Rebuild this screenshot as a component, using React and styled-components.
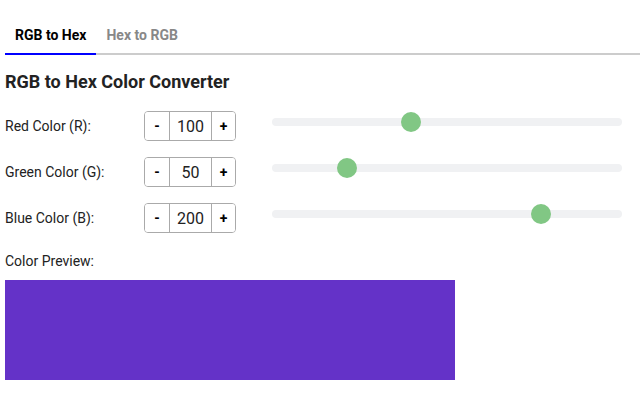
import React, { useState } from "react";
import styled, { createGlobalStyle } from "styled-components";

const GlobalStyle = createGlobalStyle`
  * { box-sizing: border-box; }
  body {
    margin: 0;
    background: #fff;
    font-family: Roboto, "Liberation Sans", Arial, sans-serif;
    color: #222;
  }
`;

const Page = styled.div`
  padding: 17px 0 0 5px;
`;

const TabBar = styled.div`
  display: flex;
  border-bottom: 2px solid #ccc;
`;

const Tab = styled.button`
  border: none;
  background: none;
  font-family: inherit;
  font-size: 14px;
  font-weight: 700;
  line-height: 16px;
  padding: 10px;
  margin-bottom: -2px;
  color: ${(p) => (p.$active ? "#000" : "#888")};
  border-bottom: 2px solid ${(p) => (p.$active ? "#0000ff" : "transparent")};
  cursor: pointer;
`;

const Title = styled.h2`
  margin: 16px 0 18px;
  font-size: 18px;
  line-height: 22px;
  font-weight: 700;
  color: #222;
`;

const Row = styled.div`
  display: flex;
  align-items: center;
  margin-bottom: 16px;
`;

const Label = styled.label`
  width: 139px;
  font-size: 14px;
  color: #222;
`;

const Stepper = styled.div`
  display: flex;
  height: 30px;
  border: 1px solid #aaa;
  border-radius: 4px;
  overflow: hidden;
`;

const StepButton = styled.button`
  width: ${(p) => p.$w}px;
  border: none;
  background: #fff;
  font-family: inherit;
  font-size: 14px;
  font-weight: 700;
  color: #000;
  padding: 0;
  cursor: pointer;
`;

const ValueInput = styled.input`
  width: 43px;
  border: none;
  border-left: 1px solid #aaa;
  border-right: 1px solid #aaa;
  font-family: inherit;
  font-size: 16px;
  color: #222;
  text-align: center;
  padding: 0;
  outline: none;
`;

const Slider = styled.input`
  -webkit-appearance: none;
  appearance: none;
  width: 350px;
  height: 8px;
  margin: 0 0 8px 36px;
  border-radius: 4px;
  background: #f0f1f3;
  outline: none;

  &::-webkit-slider-thumb {
    -webkit-appearance: none;
    width: 20px;
    height: 20px;
    border-radius: 50%;
    background: #81c784;
    border: none;
    cursor: pointer;
  }
`;

const PreviewLabel = styled.div`
  font-size: 14px;
  line-height: 16px;
  margin: 20px 0 11px;
  color: #222;
`;

const Preview = styled.div`
  width: 450px;
  height: 100px;
`;

const clamp = (v) => Math.max(0, Math.min(255, v));

function ColorRow({ label, value, onChange }) {
  return (
    <Row>
      <Label>{label}</Label>
      <Stepper>
        <StepButton $w={24} onClick={() => onChange(clamp(value - 1))}>-</StepButton>
        <ValueInput
          value={value}
          onChange={(e) => onChange(clamp(Number(e.target.value) || 0))}
        />
        <StepButton $w={23} onClick={() => onChange(clamp(value + 1))}>+</StepButton>
      </Stepper>
      <Slider
        type="range"
        min="0"
        max="255"
        value={value}
        onChange={(e) => onChange(Number(e.target.value))}
      />
    </Row>
  );
}

export default function App() {
  const [r, setR] = useState(100);
  const [g, setG] = useState(50);
  const [b, setB] = useState(200);
  const [tab, setTab] = useState(0);

  return (
    <Page>
      <GlobalStyle />
      <TabBar>
        <Tab $active={tab === 0} onClick={() => setTab(0)}>RGB to Hex</Tab>
        <Tab $active={tab === 1} onClick={() => setTab(1)}>Hex to RGB</Tab>
      </TabBar>
      <Title>RGB to Hex Color Converter</Title>
      <ColorRow label="Red Color (R):" value={r} onChange={setR} />
      <ColorRow label="Green Color (G):" value={g} onChange={setG} />
      <ColorRow label="Blue Color (B):" value={b} onChange={setB} />
      <PreviewLabel>Color Preview:</PreviewLabel>
      <Preview style={{ background: `rgb(${r}, ${g}, ${b})` }} />
    </Page>
  );
}
